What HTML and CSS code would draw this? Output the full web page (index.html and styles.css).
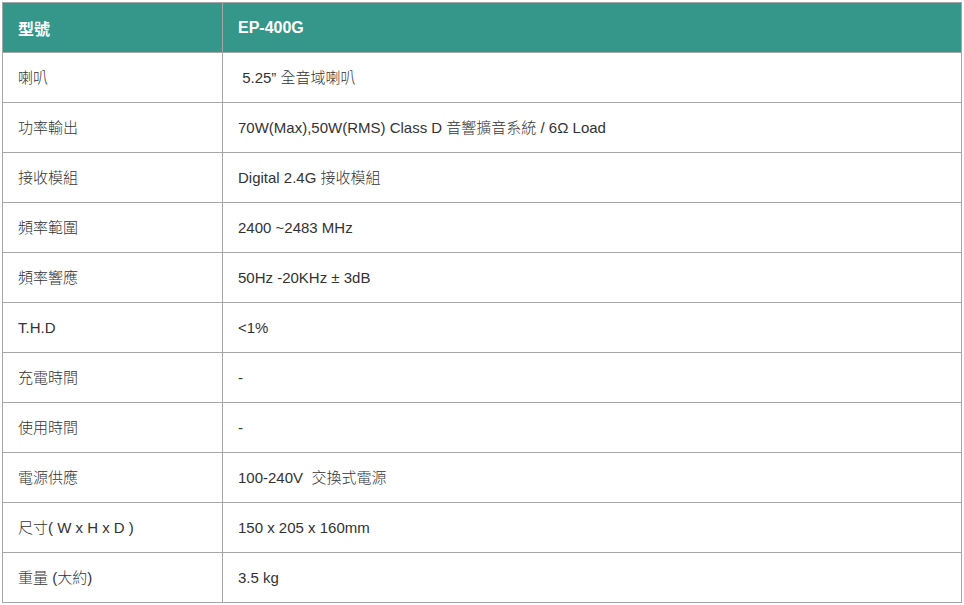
FILE: index.html
```html
<!DOCTYPE html>
<html lang="zh-Hant">
<head>
<meta charset="utf-8">
<link rel="stylesheet" href="styles.css">
</head>
<body>
<table class="spec">
<thead>
<tr><th class="c1">型號</th><th class="c2">EP-400G</th></tr>
</thead>
<tbody>
<tr><td>喇叭</td><td>&nbsp;5.25” 全音域喇叭</td></tr>
<tr><td>功率輸出</td><td>70W(Max),50W(RMS) Class D 音響擴音系統 / 6Ω Load</td></tr>
<tr><td>接收模組</td><td>Digital 2.4G 接收模組</td></tr>
<tr><td>頻率範圍</td><td>2400 ~2483 MHz</td></tr>
<tr><td>頻率響應</td><td>50Hz -20KHz ± 3dB</td></tr>
<tr><td>T.H.D</td><td>&lt;1%</td></tr>
<tr><td>充電時間</td><td>-</td></tr>
<tr><td>使用時間</td><td>-</td></tr>
<tr><td>電源供應</td><td>100-240V &nbsp;交換式電源</td></tr>
<tr><td>尺寸( W x H x D )</td><td>150 x 205 x 160mm</td></tr>
<tr><td>重量 (大約)</td><td>3.5 kg</td></tr>
</tbody>
</table>
</body>
</html>
```
FILE: styles.css
```css
html, body {
  margin: 0;
  padding: 0;
  background: #fff;
}
body {
  padding: 2px;
  font-family: "Liberation Sans", Arial, "Noto Sans CJK TC", sans-serif;
  color: #333;
  font-size: 15px;
}
.spec {
  border-collapse: collapse;
  width: 960px;
  table-layout: fixed;
}
.spec th, .spec td {
  border: 1px solid #a6a6a6;
  height: 50px;
  padding: 0 15px;
  text-align: left;
  vertical-align: middle;
  box-sizing: border-box;
}
.spec th {
  background: #35968a;
  color: #fff;
  font-weight: bold;
  font-size: 16px;
}
.spec .c1 { width: 220px; }
.spec td {
  line-height: 20px;
  font-weight: 300;
}
```
